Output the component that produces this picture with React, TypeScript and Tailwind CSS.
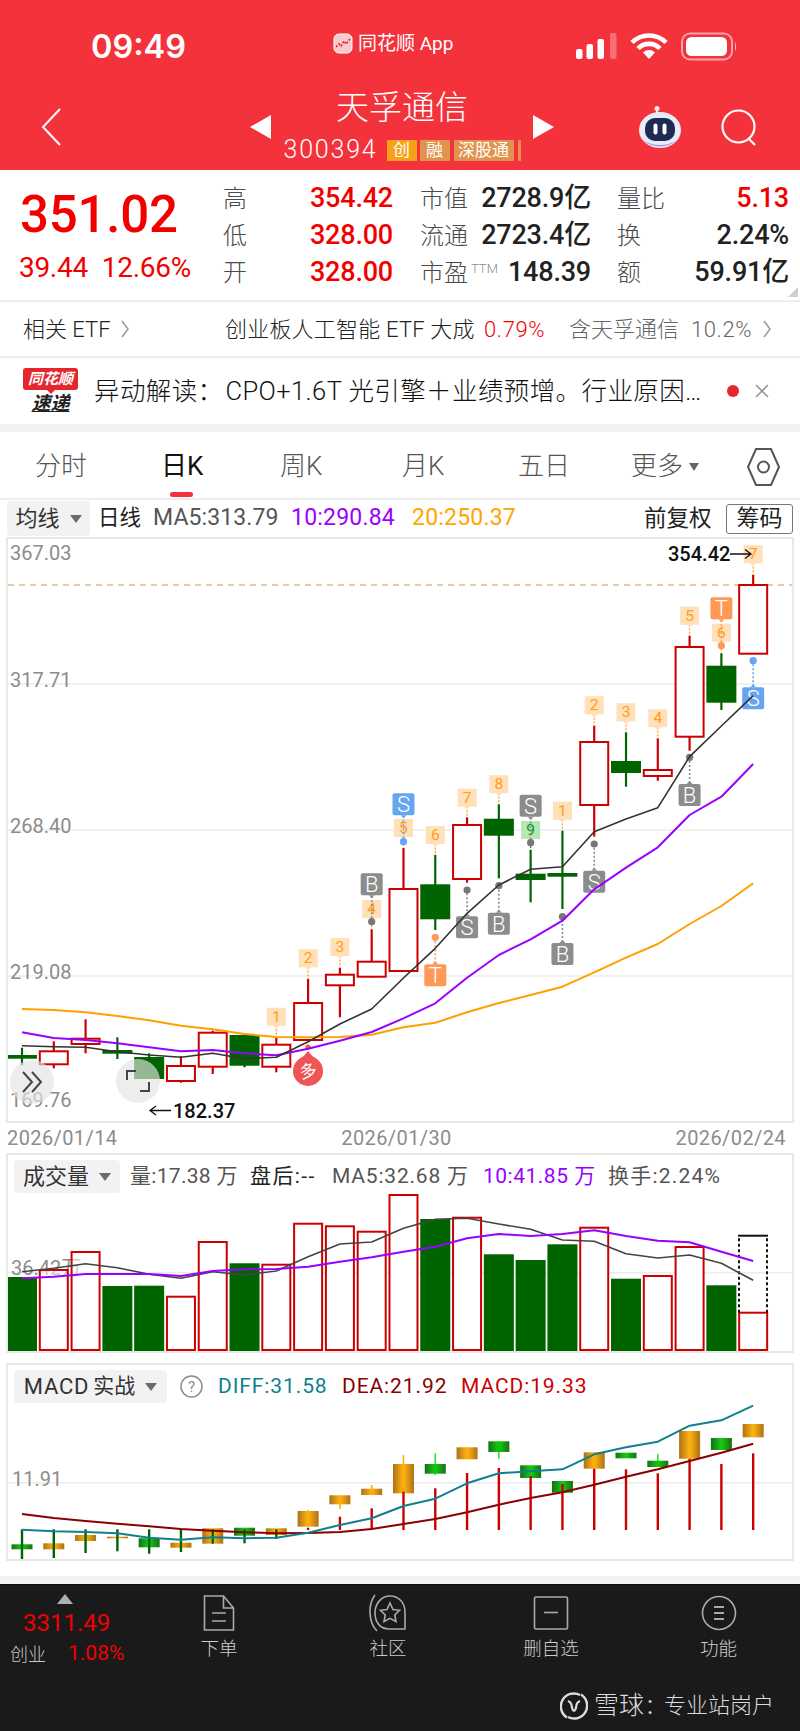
import React from "react";

const RED = "#cc0000";
const GREEN = "#006400";
const slot = (i: number) => 22 + 31.79 * i;

// [color, wick top, body top, body bottom, wick bottom]
const candles: [string, number, number, number, number][] = [
  ["g", 1047.7, 1055, 1058.7, 1065],
  ["r", 1041.3, 1051.3, 1064.3, 1068.3],
  ["r", 1019.3, 1038.7, 1044, 1053.3],
  ["g", 1037.3, 1050, 1053.7, 1059],
  ["g", 1053.3, 1057, 1079, 1079],
  ["r", 1056, 1066, 1081, 1082.7],
  ["r", 1030.7, 1032.7, 1066.7, 1074],
  ["g", 1033.3, 1035, 1065.7, 1067.3],
  ["r", 1036.7, 1044.7, 1066.7, 1072.3],
  ["r", 979, 1003, 1040, 1040],
  ["r", 967.7, 974.7, 985.3, 1017.3],
  ["r", 929.3, 961.7, 976.7, 977.3],
  ["r", 848, 889, 971, 971],
  ["g", 855, 884.3, 919.3, 930],
  ["r", 817.3, 825, 879, 882.7],
  ["g", 804.3, 818.7, 835.7, 878.3],
  ["g", 850, 873.7, 880, 902.3],
  ["g", 830.7, 873, 876.7, 909],
  ["r", 725.7, 742, 805, 836.7],
  ["g", 732.3, 761, 773, 786.7],
  ["r", 738.3, 770, 776, 780.7],
  ["r", 635.7, 647, 736.7, 750.7],
  ["g", 653.3, 665.7, 702.7, 710],
  ["r", 575, 585, 653.7, 653.7],
];

const ma5 = [1045.7, 1046.7, 1047.3, 1051.7, 1055, 1057.3, 1053.3, 1058.7, 1057.3, 1041.7, 1024, 1009, 978, 948.3, 913.3, 885, 869.3, 866.7, 831.7, 819, 807.7, 756.7, 726, 695.7];
const ma10 = [1032.3, 1038, 1040, 1043.3, 1047.3, 1051.3, 1050, 1053.3, 1055.3, 1048.7, 1040.7, 1032, 1018.3, 1003.3, 977.7, 955, 939.3, 920.7, 889.3, 867.7, 847.3, 815, 796.7, 764];
const ma20 = [1009, 1010, 1012.3, 1016, 1020.3, 1025.7, 1029.3, 1034, 1037, 1037.3, 1037, 1034.7, 1027.3, 1022.7, 1012.3, 1003, 995, 986.7, 972.3, 957.7, 944, 924, 906, 883.3];

// [slot, label, center y, stem bottom]
const numTags: [number, string, number, number][] = [
  [8, "1", 1016.7, 1036],
  [9, "2", 958.3, 979],
  [10, "3", 947, 967],
  [11, "4", 909, 929],
  [12, "5", 828, 848],
  [13, "6", 835, 855],
  [14, "7", 797.7, 817],
  [15, "8", 784.3, 804],
  [16, "9", 830, 850],
  [17, "1", 810.7, 830],
  [18, "2", 705.3, 725],
  [19, "3", 712.3, 732],
  [20, "4", 718.3, 738],
  [21, "5", 615.7, 635],
  [22, "6", 632.7, 653],
  [23, "7", 554.3, 575],
];

// [slot, letter, fill, center y, dot y]
const marks: [number, string, string, number, number][] = [
  [12, "S", "#66a6f0", 804.3, 841.7],
  [11, "B", "#8c8c8c", 884.3, 921.7],
  [13, "T", "#ff9955", 975.3, 937.3],
  [14, "S", "#8c8c8c", 927.3, 890],
  [15, "B", "#8c8c8c", 923.7, 885.7],
  [16, "S", "#8c8c8c", 805.7, 842.7],
  [17, "B", "#8c8c8c", 954, 916.7],
  [18, "S", "#8c8c8c", 881.7, 844],
  [21, "B", "#8c8c8c", 795, 757.3],
  [22, "T", "#ff9955", 608.3, 645.7],
  [23, "S", "#66a6f0", 698.3, 660.7],
];

const volumes: [string, number][] = [
  ["g", 1277], ["r", 1270], ["r", 1252], ["g", 1286], ["g", 1285.7], ["r", 1296.7],
  ["r", 1242], ["g", 1263.3], ["r", 1264.7], ["r", 1223.7], ["r", 1226.3], ["r", 1231.7],
  ["r", 1195], ["g", 1219], ["r", 1217.7], ["g", 1254.3], ["g", 1260], ["g", 1244.3],
  ["r", 1227.7], ["g", 1278.7], ["r", 1276], ["r", 1247], ["g", 1285.3], ["r", 1312.7],
];
const volMa5 = [1271.7, 1268.3, 1263.7, 1267.7, 1274.3, 1278.3, 1271.7, 1275, 1271, 1256.7, 1244, 1242, 1228.3, 1219.3, 1218.3, 1224, 1229.3, 1240, 1241.3, 1253.7, 1258, 1255, 1263.3, 1280.3];
const volMa10 = [1278.3, 1276.7, 1274, 1274, 1274, 1276, 1271, 1269.3, 1269, 1266.7, 1261.7, 1257.3, 1251.7, 1246.7, 1238.3, 1234, 1236, 1234, 1230.3, 1236, 1240.7, 1242.3, 1251.7, 1261];

// [box color, box top, box bottom, stem color, stem top, stem bottom, wick top, wick bottom]
const macd: [string, number, number, string, number, number, number, number][] = [
  ["g", 1544.3, 1549.3, GREEN, 1529.3, 1560.7, 0, 0],
  ["o", 1543.3, 1549.3, GREEN, 1529.3, 1558, 0, 0],
  ["o", 1535, 1541, GREEN, 1529.3, 1553, 0, 0],
  ["o", 1536.7, 1538.3, GREEN, 1529.3, 1551.3, 0, 0],
  ["g", 1538.3, 1547.3, GREEN, 1529.3, 1553.7, 0, 0],
  ["o", 1542.7, 1547.7, GREEN, 1529.3, 1552, 0, 0],
  ["o", 1528.3, 1543.7, GREEN, 1529.3, 1543.7, 0, 0],
  ["g", 1527.7, 1535.7, GREEN, 1529.3, 1543.3, 0, 0],
  ["o", 1528.3, 1535, GREEN, 1529.3, 1539, 0, 0],
  ["o", 1511, 1526.7, RED, 1527.7, 1530, 1510, 1526],
  ["o", 1495.3, 1504.3, RED, 1516.7, 1530, 1495.3, 1509],
  ["o", 1488.7, 1495, RED, 1508.3, 1530, 1485, 1495],
  ["o", 1464, 1493.3, RED, 1491.7, 1530, 1455, 1491],
  ["g", 1464, 1473.7, RED, 1488.3, 1530, 1453.3, 1475],
  ["o", 1447.3, 1459.3, RED, 1473, 1530, 1447.3, 1459.3],
  ["g", 1441.3, 1452, RED, 1468, 1530, 1441.3, 1458.7],
  ["g", 1465.3, 1478, RED, 1476, 1530, 0, 0],
  ["g", 1481, 1492.7, RED, 1484, 1530, 0, 0],
  ["o", 1452.3, 1468.7, RED, 1468.7, 1530, 1452.3, 1468.7],
  ["g", 1452.7, 1458.3, RED, 1469.3, 1530, 0, 0],
  ["g", 1460.7, 1467, RED, 1473.3, 1530, 1454.3, 1467],
  ["o", 1431, 1458.7, RED, 1458.7, 1530, 1436, 1452],
  ["g", 1438, 1450, RED, 1464, 1530, 0, 0],
  ["o", 1424, 1437.3, RED, 1453.3, 1530, 0, 0],
];
const diff = [1529.7, 1531.3, 1532, 1533.3, 1537.7, 1539.7, 1537.3, 1538.3, 1537.7, 1532.7, 1525, 1518.3, 1506, 1498.7, 1483.3, 1473.3, 1471.3, 1469.3, 1454.3, 1447.3, 1441.7, 1425.7, 1420.3, 1405.7];
const dea = [1514, 1518, 1521, 1523.7, 1526.3, 1529, 1530.7, 1532.3, 1533.3, 1533, 1532, 1529, 1524, 1519, 1512.3, 1504.7, 1498, 1492.3, 1484.7, 1476.7, 1469.3, 1461, 1452.7, 1443.7];

const Line = ({ ys, color, width = 2 }: { ys: number[]; color: string; width?: number }) => (
  <polyline
    points={ys.map((y, i) => `${slot(i)},${y}`).join(" ")}
    fill="none"
    stroke={color}
    strokeWidth={width}
    strokeLinejoin="round"
  />
);

const AxisLabel = ({ y, children }: { y: number; children: React.ReactNode }) => (
  <text x={10} y={y} fontSize={20} fill="#8c8c8c" dominantBaseline="central">
    {children}
  </text>
);

const Grid = ({ y }: { y: number }) => <line x1={8} x2={792} y1={y} y2={y} stroke="#ececec" strokeWidth={1.5} />;

const Caret = () => (
  <svg width="12" height="8" viewBox="0 0 12 8" className="ml-[10px]">
    <polygon points="0,0 12,0 6,8" fill="#6b6b6b" />
  </svg>
);

const Dropdown = ({ children, className }: { children: React.ReactNode; className: string }) => (
  <div className={`flex items-center justify-center bg-[#f2f2f2] rounded-[4px] text-[#333] text-[22px] ${className}`}>
    {children}
    <Caret />
  </div>
);

const Stat = ({ label, value, tone, sup }: { label: string; value: string; tone: string; sup?: boolean }) => (
  <div className="flex items-center justify-between h-[37px]">
    <span className="text-[24px] font-light text-[#4a4a4a] flex items-start">
      {label}
      {sup && <span className="text-[13px] text-[#8c8c8c] ml-[3px] mt-[4px]">TTM</span>}
    </span>
    <span className={`text-[27px] font-medium tracking-[-0.2px] ${tone}`}>{value}</span>
  </div>
);

const NavChevron = ({ className }: { className: string }) => (
  <svg width="10" height="18" viewBox="0 0 10 18" className={className}>
    <path d="M2 1l6 8-6 8" fill="none" stroke="#999" strokeWidth="1.5" />
  </svg>
);

const App = () => {
  return (
    <div className="w-[800px] h-[1731px] bg-white flex flex-col overflow-hidden font-['Roboto','Noto_Sans_CJK_SC',sans-serif]">
      {/* red header */}
      <div className="h-[170px] shrink-0 bg-[#f3323c] text-white flex flex-col">
        <div className="h-[84px] pt-[10px] flex items-center">
          <span className="ml-[91px] w-[242px] text-[32.5px] font-semibold font-['Inter',sans-serif]">09:49</span>
          <svg width="20" height="21" viewBox="0 0 20 21" className="mb-[8px]">
            <rect x="1" y="1" width="18" height="19" rx="5" fill="#f9c9cc" stroke="#fff" strokeWidth="1" />
            <path d="M3 14l3-3 2 2 3-5 2 3 4-5" fill="none" stroke="#e0202c" strokeWidth="1.6" strokeDasharray="2 1.5" />
          </svg>
          <span className="ml-[5px] w-[218px] text-[19px] leading-none mb-[8px]">同花顺 App</span>
          <svg width="160" height="30" viewBox="0 0 160 30">
            <rect x="0" y="17" width="6.5" height="10" rx="2" fill="#fff" />
            <rect x="10.5" y="12" width="6.5" height="15" rx="2" fill="#fff" />
            <rect x="21.5" y="7" width="6.5" height="20" rx="2" fill="#fff" />
            <rect x="34" y="1" width="6.5" height="26" rx="2" fill="#fff" opacity="0.3" />
            <path d="M56 10.5a24 24 0 0 1 34 0" fill="none" stroke="#fff" strokeWidth="4.6" />
            <path d="M62 16.5a15.5 15.5 0 0 1 22 0" fill="none" stroke="#fff" strokeWidth="4.6" />
            <path d="M73 27l-6-6.5a8.5 8.5 0 0 1 12 0z" fill="#fff" />
            <rect x="106" y="1.5" width="50" height="26" rx="8" fill="none" stroke="#fff" strokeOpacity="0.55" strokeWidth="2" />
            <rect x="110" y="5" width="41" height="19" rx="5.5" fill="#fff" />
            <path d="M159 10c1.5 1 1.5 8 0 9z" fill="#fff" opacity="0.6" />
          </svg>
        </div>
        <div className="h-[86px] flex items-center">
          <svg width="20" height="38" viewBox="0 0 20 38" className="ml-[41px]">
            <path d="M19 1L2 19l17 18" fill="none" stroke="#fff" strokeWidth="2" />
          </svg>
          <svg width="21" height="24" viewBox="0 0 21 24" className="ml-[189px]">
            <polygon points="21,0 21,24 0,12" fill="#fff" />
          </svg>
          <div className="w-[262px] flex flex-col items-center">
            <div className="h-[44px] leading-[44px] mt-[2px] text-[33px] font-light">天孚通信</div>
            <div className="h-[40px] flex items-center">
              <span className="text-[25px] font-light tracking-[1.8px]">300394</span>
              <span className="ml-[9px] h-[21px] w-[30px] bg-[#f7a11a] text-[17px] leading-[21px] text-center">创</span>
              <span className="ml-[3px] h-[21px] w-[30px] bg-[#e0934d] text-[17px] leading-[21px] text-center">融</span>
              <span className="ml-[4px] h-[21px] w-[60px] bg-[#e0934d] text-[17px] leading-[21px] text-center whitespace-nowrap">深股通</span>
              <span className="ml-[4px] h-[21px] w-[3px] bg-[#e0934d]" />
            </div>
          </div>
          <svg width="21" height="24" viewBox="0 0 21 24">
            <polygon points="0,0 0,24 21,12" fill="#fff" />
          </svg>
          <svg width="46" height="44" viewBox="0 0 46 44" className="ml-[83px]">
            <circle cx="20" cy="3.5" r="2.5" fill="#e8eaf5" />
            <path d="M20 5v5" stroke="#e8eaf5" strokeWidth="2" />
            <ellipse cx="23" cy="25" rx="21" ry="18" fill="#e9ecf8" />
            <path d="M6 35a22 18 0 0 0 34 0a22 14 0 0 1-34 0z" fill="#a98ee6" />
            <rect x="8" y="13" width="30" height="23" rx="10" fill="#1c2a55" />
            <rect x="16.5" y="18.5" width="4" height="11" rx="2" fill="#fff" />
            <rect x="25.5" y="18.5" width="4" height="11" rx="2" fill="#fff" />
          </svg>
          <svg width="37" height="37" viewBox="0 0 37 37" className="ml-[38px]">
            <circle cx="17.5" cy="17.5" r="16" fill="none" stroke="#fff" strokeWidth="2.2" />
            <path d="M27 29l7 7" stroke="#fff" strokeWidth="2.2" />
          </svg>
        </div>
      </div>

      {/* quote */}
      <div className="relative h-[132px] shrink-0 flex border-b-2 border-[#eeeeee]">
        <div className="w-[223px] pl-[20px] flex flex-col">
          <div className="mt-[13px] h-[64px] leading-[64px] text-[51px] font-medium text-[#f20000] tracking-[-0.2px]">351.02</div>
          <div className="mt-[3px] flex text-[28px] leading-[36px] text-[#f20000] tracking-[-0.3px] -ml-[1px]">
            <span>39.44</span>
            <span className="ml-[14px]">12.66%</span>
          </div>
        </div>
        <div className="w-[170px] mt-[10px]">
          <Stat label="高" value="354.42" tone="text-[#f20000]" />
          <Stat label="低" value="328.00" tone="text-[#f20000]" />
          <Stat label="开" value="328.00" tone="text-[#f20000]" />
        </div>
        <div className="w-[171px] ml-[27px] mt-[10px]">
          <Stat label="市值" value="2728.9亿" tone="text-[#222]" />
          <Stat label="流通" value="2723.4亿" tone="text-[#222]" />
          <Stat label="市盈" value="148.39" tone="text-[#222]" sup />
        </div>
        <div className="w-[172px] ml-[26px] mt-[10px]">
          <Stat label="量比" value="5.13" tone="text-[#f20000]" />
          <Stat label="换" value="2.24%" tone="text-[#222]" />
          <Stat label="额" value="59.91亿" tone="text-[#222]" />
        </div>
        <svg width="10" height="10" viewBox="0 0 10 10" className="absolute right-[2px] bottom-[3px]">
          <polygon points="10,0 10,10 0,10" fill="#cfcfcf" />
        </svg>
      </div>

      {/* etf row */}
      <div className="h-[56px] shrink-0 flex items-center border-b-2 border-[#eeeeee] text-[22px] font-light whitespace-nowrap">
        <span className="ml-[23px] w-[97px] text-[#222]">相关 ETF</span>
        <NavChevron className="" />
        <span className="ml-[95px] w-[259px] text-[#222] tracking-[0.2px]">创业板人工智能 ETF 大成</span>
        <span className="w-[85px] text-[#f20000] tracking-[0.6px]">0.79%</span>
        <span className="w-[122px] text-[#666]">含天孚通信</span>
        <span className="w-[71px] text-[#666] tracking-[0.6px]">10.2%</span>
        <NavChevron className="" />
      </div>

      {/* news row */}
      <div className="h-[66px] shrink-0 flex items-center">
        <div className="relative ml-[23px] w-[55px] flex flex-col items-center">
          <div className="w-[55px] h-[22px] rounded-[3px] bg-[#e5262e] text-white text-[15px] font-bold italic leading-[22px] text-center">同花顺</div>
          <svg width="8" height="4" viewBox="0 0 8 4" className="block">
            <polygon points="0,0 8,0 4,4" fill="#e5262e" />
          </svg>
          <div className="text-[#222] text-[19px] font-bold italic leading-[20px] underline">速递</div>
        </div>
        <div className="ml-[16px] w-[623px] text-[25.5px] font-light tracking-[0.4px] text-[#111] whitespace-nowrap overflow-hidden">
          异动解读：<span className="ml-[2px]">CPO+1.6T</span> 光引擎＋业绩预增。行业原因…
        </div>
        <span className="ml-[10px] w-[12px] h-[12px] rounded-full bg-[#e5262e]" />
        <svg width="14" height="14" viewBox="0 0 14 14" className="ml-[16px]">
          <path d="M1 1l12 12M13 1L1 13" stroke="#999" strokeWidth="1.6" />
        </svg>
      </div>
      <div className="h-[8px] shrink-0 bg-[#f2f2f2]" />

      {/* tabs */}
      <div className="relative h-[68px] shrink-0 pt-[3px] pl-[35px] flex items-center border-b-2 border-[#eeeeee] text-[26px] font-light text-[#555] whitespace-nowrap">
        <span className="w-[126px]">分时</span>
        <span className="w-[119px] text-[#111] font-normal">日K</span>
        <span className="w-[122px]">周K</span>
        <span className="w-[116px]">月K</span>
        <span className="w-[113px]">五日</span>
        <span className="w-[58px]">更多</span>
        <svg width="10" height="8" viewBox="0 0 10 8">
          <polygon points="0,0 10,0 5,8" fill="#666" />
        </svg>
        <svg width="33" height="42" viewBox="0 0 33 42" className="ml-[48px]">
          <path d="M9 3h15l8 18-8 18H9L1 21z" fill="none" stroke="#555" strokeWidth="2" />
          <circle cx="16.5" cy="21" r="5.5" fill="none" stroke="#555" strokeWidth="2" />
        </svg>
        <span className="absolute left-[170px] bottom-[1px] w-[23px] h-[5px] rounded-full bg-[#f3323c]" />
      </div>

      {/* ma toolbar */}
      <div className="h-[37px] shrink-0 flex items-center text-[23px] whitespace-nowrap">
        <Dropdown className="ml-[7px] w-[83px] h-[35px]">均线</Dropdown>
        <span className="ml-[8px] w-[55px] text-[#222] text-[21.5px]">日线</span>
        <span className="w-[138px] text-[#555] tracking-[0.1px]">MA5:313.79</span>
        <span className="w-[121px] text-[#9900ff] tracking-[0.2px]">10:290.84</span>
        <span className="w-[232px] text-[#ffa500] tracking-[0.2px]">20:250.37</span>
        <span className="w-[82px] text-[#222] text-[22.5px]">前复权</span>
        <span className="w-[67px] h-[30px] leading-[28px] text-center border-[1.5px] border-[#777] rounded-[3px] text-[#222]">筹码</span>
      </div>

      {/* k-line chart */}
      <div className="relative mx-[6px] w-[788px] h-[586px] shrink-0 border-2 border-[#e8e8e8]">
        <svg width="784" height="582" viewBox="8 539 784 582" className="block">
          <Grid y={684} />
          <Grid y={830} />
          <Grid y={976} />
          <line x1={8} x2={792} y1={585} y2={585} stroke="#e3bb8c" strokeWidth={1.5} strokeDasharray="6 5" />
          {candles.map(([c, hi, top, bot, lo], i) => {
            const x = slot(i);
            const stroke = c === "r" ? RED : GREEN;
            return (
              <g key={i}>
                <line x1={x} x2={x} y1={hi} y2={lo} stroke={stroke} strokeWidth={2.2} />
                {c === "r" ? (
                  <rect x={x - 14} y={top} width={28} height={bot - top} fill="#fff" stroke={RED} strokeWidth={2} />
                ) : (
                  <rect x={x - 15} y={top} width={30} height={bot - top} fill={GREEN} />
                )}
              </g>
            );
          })}
          {numTags.map(([i, n, y, end]) => {
            const x = slot(i);
            const green = n === "9" && i === 16;
            return (
              <g key={`n${i}`}>
                <line x1={x} x2={x} y1={y + 9} y2={end} stroke={green ? "#555" : "#ff9c1a"} strokeWidth={1.2} strokeDasharray="2 1.5" />
                <path
                  d={`M${x - 9.5} ${y - 9}h19v18h-6.5l-3 3-3-3h-6.5z`}
                  fill={green ? "#b5e6b5" : "#ffe0b8"}
                />
                <text x={x} y={y} fontSize={15.5} fill={green ? "#0a9a0a" : "#ff9c1a"} textAnchor="middle" dominantBaseline="central">
                  {n}
                </text>
              </g>
            );
          })}
          {marks.map(([i, l, fill, y, dot]) => {
            const x = slot(i);
            const below = y > dot;
            return (
              <g key={`m${i}`}>
                <line x1={x} x2={x} y1={y} y2={dot} stroke={fill} strokeWidth={1.6} strokeDasharray="2 2" />
                <circle cx={x} cy={dot} r={3.6} fill={fill === "#8c8c8c" ? "#777" : fill} />
                <rect x={x - 11} y={y - 11} width={22} height={22} rx={2} fill={fill} />
                <polygon
                  points={below ? `${x - 3},${y - 11} ${x + 3},${y - 11} ${x},${y - 14}` : `${x - 3},${y + 11} ${x + 3},${y + 11} ${x},${y + 14}`}
                  fill={fill}
                />
                <text x={x} y={y + 0.5} fontSize={22} fill="#fff" textAnchor="middle" dominantBaseline="central" fontWeight={300}>
                  {l}
                </text>
              </g>
            );
          })}
          <circle cx={308} cy={1047} r={2.6} fill="#ee5555" />
          <circle cx={308} cy={1071} r={15} fill="#ee5555" />
          <polygon points="302,1058 314,1058 308,1051" fill="#ee5555" />
          <text x={308} y={1071} fontSize={17} fill="#fff" textAnchor="middle" dominantBaseline="central" transform="rotate(-12 308 1071)">
            多
          </text>
          <Line ys={ma20} color="#ffa000" />
          <Line ys={ma10} color="#9900ff" />
          <Line ys={ma5} color="#333333" width={1.6} />
          <AxisLabel y={553}>367.03</AxisLabel>
          <AxisLabel y={680}>317.71</AxisLabel>
          <AxisLabel y={826}>268.40</AxisLabel>
          <AxisLabel y={972}>219.08</AxisLabel>
          <AxisLabel y={1100}>169.76</AxisLabel>
          <text x={668} y={554} fontSize={20} fontWeight={500} fill="#111" dominantBaseline="central">
            354.42
          </text>
          <path d="M730 554h21M745 549.5l6 4.5-6 4.5" fill="none" stroke="#111" strokeWidth={1.3} />
          <path d="M171 1110.5h-21M156 1106l-6 4.5 6 4.5" fill="none" stroke="#111" strokeWidth={1.3} />
          <text x={173} y={1110.5} fontSize={20} fontWeight={500} fill="#111" dominantBaseline="central">
            182.37
          </text>
        </svg>
        <div className="absolute left-[2px] top-[521px] w-[44px] h-[44px] rounded-full bg-[#e4e4e4]/65 flex items-center justify-center">
          <svg width="22" height="24" viewBox="0 0 22 24">
            <path d="M2 2l9 10-9 10M11 2l9 10-9 10" fill="none" stroke="#444" strokeWidth="2" />
          </svg>
        </div>
        <div className="absolute left-[108px] top-[520px] w-[44px] h-[44px] rounded-full bg-[#e4e4e4]/65 flex items-center justify-center">
          <svg width="24" height="24" viewBox="0 0 24 24">
            <path d="M1 11V2h9M23 13v9h-9" fill="none" stroke="#444" strokeWidth="2" />
          </svg>
        </div>
      </div>

      {/* dates */}
      <div className="h-[30px] shrink-0 px-[7px] flex items-center justify-between text-[20px] tracking-[0.4px] text-[#8c8c8c] pr-[14px]">
        <span>2026/01/14</span>
        <span>2026/01/30</span>
        <span>2026/02/24</span>
      </div>

      {/* volume */}
      <div className="mx-[6px] w-[788px] h-[200px] shrink-0 border-2 border-[#e8e8e8] flex flex-col">
        <div className="h-[38px] pt-[5px] flex items-center text-[21px] whitespace-nowrap">
          <Dropdown className="ml-[6px] w-[106px] h-[33px]">成交量</Dropdown>
          <span className="ml-[10px] w-[120px] text-[#555] tracking-[0.3px]">量:17.38 万</span>
          <span className="w-[82px] text-[#222] tracking-[1.4px]">盘后:--</span>
          <span className="w-[151px] text-[#555] tracking-[0.8px]">MA5:32.68 万</span>
          <span className="w-[125px] text-[#9900ff] tracking-[0.5px]">10:41.85 万</span>
          <span className="text-[#555] tracking-[1.2px]">换手:2.24%</span>
        </div>
        <svg width="784" height="158" viewBox="8 1193 784 158" className="block">
          <Grid y={1272.7} />
          <text x={11} y={1268} fontSize={20} fill="#8c8c8c" dominantBaseline="central">
            36.42万
          </text>
          {volumes.map(([c, top], i) => {
            const x = slot(i);
            return c === "r" ? (
              <rect key={i} x={x - 14} y={top} width={28} height={1350 - top} fill="#fff" fillOpacity={i < 3 ? 0.55 : 1} stroke={RED} strokeWidth={2} />
            ) : (
              <rect key={i} x={x - 15} y={top} width={30} height={1351 - top} fill={GREEN} />
            );
          })}
          <path d="M739 1312.7V1235.7M767 1312.7V1235.7" fill="none" stroke="#111" strokeWidth={2} strokeDasharray="3 2.5" />
          <path d="M738 1235.7H768" stroke="#111" strokeWidth={2} />
          <Line ys={volMa5} color="#444444" width={1.6} />
          <Line ys={volMa10} color="#9900ff" />
        </svg>
      </div>

      {/* macd */}
      <div className="mt-[10px] mx-[6px] w-[788px] h-[198px] shrink-0 border-2 border-[#e8e8e8] flex flex-col">
        <div className="h-[38px] pt-[5px] flex items-center text-[21px] whitespace-nowrap">
          <Dropdown className="ml-[6px] w-[153px] h-[33px]">
            <span className="tracking-[0.8px]">MACD</span>
            <span className="ml-[4px] text-[21px]">实战</span>
          </Dropdown>
          <svg width="23" height="23" viewBox="0 0 23 23" className="ml-[13px]">
            <circle cx="11.5" cy="11.5" r="10.5" fill="none" stroke="#8c8c8c" strokeWidth="1.5" />
            <text x="11.5" y="12" fontSize="15" fill="#8c8c8c" textAnchor="middle" dominantBaseline="central">?</text>
          </svg>
          <span className="ml-[15px] w-[124px] text-[#10808f] tracking-[0.9px]">DIFF:31.58</span>
          <span className="w-[119px] text-[#8b0000] tracking-[0.9px]">DEA:21.92</span>
          <span className="text-[#cc0000] tracking-[0.9px]">MACD:19.33</span>
        </div>
        <svg width="784" height="156" viewBox="8 1403 784 156" className="block">
          <defs>
            <linearGradient id="gold" x1="0" x2="1" y1="0" y2="0">
              <stop offset="0" stopColor="#a86400" />
              <stop offset="0.5" stopColor="#ffb000" />
              <stop offset="1" stopColor="#a86400" />
            </linearGradient>
            <linearGradient id="lime" x1="0" x2="1" y1="0" y2="0">
              <stop offset="0" stopColor="#006400" />
              <stop offset="0.5" stopColor="#00c800" />
              <stop offset="1" stopColor="#006400" />
            </linearGradient>
          </defs>
          <Grid y={1482.7} />
          <text x={12} y={1479} fontSize={20} fill="#8c8c8c" dominantBaseline="central">
            11.91
          </text>
          {macd.map(([c, top, bot, stem, s1, s2, w1, w2], i) => {
            const x = slot(i);
            return (
              <g key={i}>
                {w1 > 0 && <line x1={x} x2={x} y1={w1} y2={w2} stroke={c === "o" ? "#ffb000" : "#22e622"} strokeWidth={1.6} />}
                <rect x={x - 10.5} y={top} width={21} height={bot - top} fill={c === "o" ? "url(#gold)" : "url(#lime)"} fillOpacity={0.92} />
                <line x1={x} x2={x} y1={s1} y2={s2} stroke={stem} strokeWidth={2.4} />
              </g>
            );
          })}
          <Line ys={dea} color="#8b0000" />
          <Line ys={diff} color="#10808f" />
        </svg>
      </div>

      <div className="h-[15px] shrink-0" />
      <div className="h-[8px] shrink-0 bg-[#f2f2f2]" />

      {/* bottom bar */}
      <div className="flex-1 bg-[#1a1a1a] border-t border-[#0c0c0c] flex flex-col">
        <div className="flex h-[90px]">
          <div className="w-[137px] flex flex-col pt-[9px]">
            <svg width="16" height="10" viewBox="0 0 16 10" className="ml-[57px]">
              <polygon points="8,0 16,10 0,10" fill="#b0b0b0" />
            </svg>
            <span className="ml-[23px] mt-[5px] text-[24px] leading-[28px] text-[#f00000]">3311.49</span>
            <div className="flex items-center mt-[3px] h-[28px]">
              <span className="ml-[10px] text-[18px] font-light text-[#c8c8c8]">创业</span>
              <span className="ml-[22px] text-[21px] text-[#f00000]">1.08%</span>
            </div>
          </div>
          <div className="w-[166px] shrink-0 flex flex-col items-center pt-[9px]">
            <svg width="34" height="38" viewBox="0 0 34 38">
              <path d="M2.5 2h19l10 12v22h-29zM21.5 2v12h10M10 19h14M10 27h14" fill="none" stroke="#aaa" strokeWidth="1.6" />
            </svg>
            <span className="mt-[4px] text-[18.5px] font-light text-[#ccc]">下单</span>
          </div>
          <div className="w-[166px] shrink-0 flex flex-col items-center pt-[9px] pl-[6px]">
            <svg width="40" height="38" viewBox="0 0 40 38">
              <path d="M7 1C0 10 0 28 9 37" fill="none" stroke="#aaa" strokeWidth="1.6" />
              <path d="M22 2c8 0 15 6 15 16v17H21c-9 0-14-7-14-16S13 2 22 2z" fill="none" stroke="#aaa" strokeWidth="1.6" />
              <path d="M22 9l3 6.5 6.5.8-4.7 4.6 1.2 6.6-6-3.2-6 3.2 1.2-6.6-4.7-4.6 6.5-.8z" fill="none" stroke="#aaa" strokeWidth="1.6" />
            </svg>
            <span className="mt-[4px] text-[18.5px] font-light text-[#ccc]">社区</span>
          </div>
          <div className="w-[166px] shrink-0 flex flex-col items-center pt-[9px]">
            <svg width="36" height="38" viewBox="0 0 36 38">
              <rect x="1.5" y="3" width="33" height="32" rx="1.5" fill="none" stroke="#aaa" strokeWidth="1.6" />
              <path d="M11 18.5h14" stroke="#aaa" strokeWidth="1.6" />
            </svg>
            <span className="mt-[4px] text-[18.5px] font-light text-[#ccc]">删自选</span>
          </div>
          <div className="w-[166px] shrink-0 flex flex-col items-center pt-[9px] pl-[3px]">
            <svg width="36" height="38" viewBox="0 0 36 38">
              <circle cx="18" cy="19" r="16.5" fill="none" stroke="#aaa" strokeWidth="1.6" />
              <path d="M13 13h10M13 19h10M13 25h10" stroke="#aaa" strokeWidth="1.8" />
            </svg>
            <span className="mt-[4px] text-[18.5px] font-light text-[#ccc]">功能</span>
          </div>
        </div>
        <div className="flex items-center justify-end pr-[26px] mt-[12px] text-[#dcdcdc]">
          <svg width="28" height="28" viewBox="0 0 28 28">
            <path d="M20 3A13 13 0 0 0 7 25.5" fill="none" stroke="#dcdcdc" strokeWidth="2.4" />
            <path d="M8 25A13 13 0 0 0 21 2.5" fill="none" stroke="#dcdcdc" strokeWidth="2.4" />
            <path d="M8 9c6 2 2 8 6 10M20 9c-6 2-2 8-6 10" fill="none" stroke="#dcdcdc" strokeWidth="2.2" />
          </svg>
          <span className="ml-[6px] text-[25px] font-light">雪球</span>
          <span className="ml-[3px] text-[25px]">:</span>
          <span className="ml-[11px] text-[22px] font-light">专业站岗户</span>
        </div>
      </div>
    </div>
  );
};

export default App;
